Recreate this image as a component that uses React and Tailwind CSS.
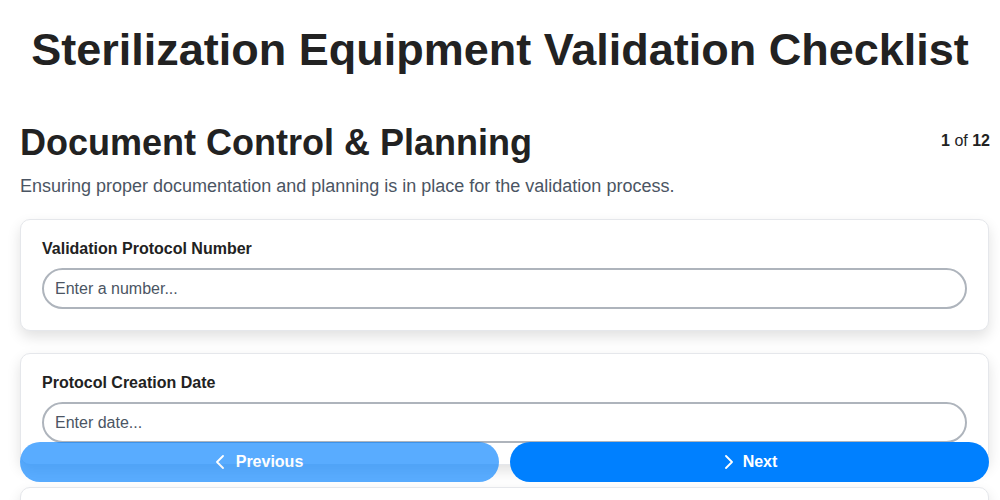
const fields = [
    { label: "Validation Protocol Number", placeholder: "Enter a number..." },
    { label: "Protocol Creation Date", placeholder: "Enter date..." },
    { label: "Equipment Identification", placeholder: "Enter text..." },
];

const Chevron = ({ dir }) => (
    <svg width="8" height="14" viewBox="0 0 8 14" fill="none" stroke="currentColor" strokeWidth="1.8" strokeLinecap="round" strokeLinejoin="round">
        <path d={dir === "left" ? "M7 1 1 7l6 6" : "M1 1l6 6-6 6"} />
    </svg>
);

const FieldCard = ({ label, placeholder }) => (
    <div className="bg-white border border-[#e5e7eb] rounded-[10px] shadow-[0_6px_14px_rgba(0,0,0,0.12)] px-[21px] pt-[20px] pb-[21px]">
        <label className="block text-[16px] font-bold text-[#222] leading-[18px] mb-[10px]">{label}</label>
        <input
            type="text"
            placeholder={placeholder}
            className="w-full h-[41px] rounded-full border-2 border-[#aeb4bc] px-[11px] text-[16px] text-[#222] placeholder:text-[#4b5563] outline-none bg-white"
        />
    </div>
);

const App = () => {
    return <div className="min-h-screen bg-white text-[#222] font-['Liberation_Sans',Arial,sans-serif]">
        <h1 className="text-center text-[45px] font-bold leading-[50px] pt-[25px] pb-[48px]">Sterilization Equipment Validation Checklist</h1>
        <div className="pl-5 pr-[11px] pb-24">
            <div className="flex flex-row justify-between items-start">
                <h2 className="text-[36px] font-bold leading-[40px]">Document Control &amp; Planning</h2>
                <div className="text-[16px] mt-[6px] mr-[-1px]"><span className="font-bold">1</span> of <span className="font-bold">12</span></div>
            </div>
            <p className="text-[18px] text-[#4b5563] leading-[22px] mt-[12px] mb-[22px]">Ensuring proper documentation and planning is in place for the validation process.</p>
            <div className="flex flex-col gap-[22px]">
                {fields.map(f => <FieldCard key={f.label} {...f} />)}
            </div>
        </div>
        <div className="fixed left-5 right-[11px] bottom-[18px] grid grid-cols-2 gap-[11px]">
            <button disabled className="h-[40px] rounded-full bg-[#0080ff] opacity-65 text-white font-bold text-[16px] flex flex-row items-center justify-center gap-[12px]">
                <Chevron dir="left" />
                Previous
            </button>
            <button className="h-[40px] rounded-full bg-[#0080ff] text-white font-bold text-[16px] flex flex-row items-center justify-center">
                <span className="flex flex-row items-center gap-[10px] pl-[3px]">
                    <Chevron dir="right" />
                    Next
                </span>
            </button>
        </div>
    </div>;
};

export default App;
